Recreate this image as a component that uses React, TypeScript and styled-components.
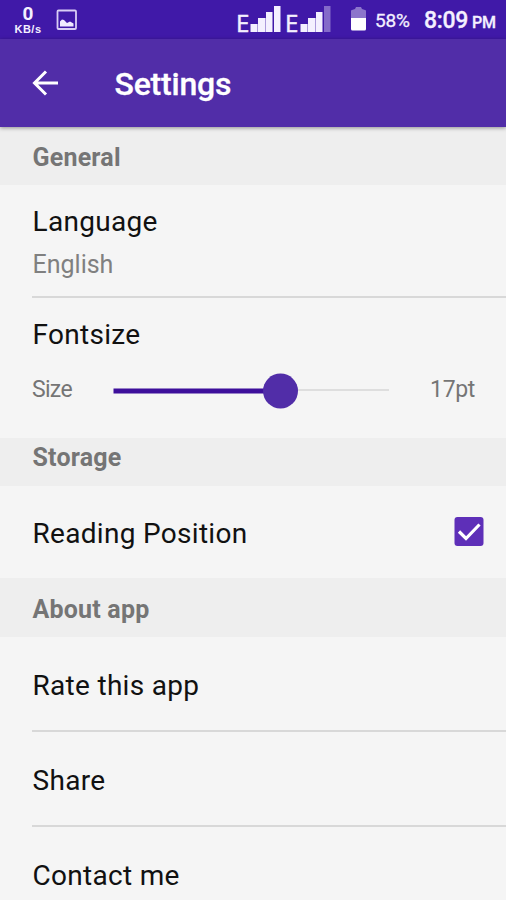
import React from "react";
import styled, { createGlobalStyle } from "styled-components";

const GlobalStyle = createGlobalStyle`
  * { box-sizing: border-box; }
  body { margin: 0; background: #f5f5f5; font-family: Roboto, sans-serif; overflow: hidden; }
`;

const Screen = styled.main`
  display: flex;
  flex-direction: column;
  width: 506px;
  height: 900px;
  overflow: hidden;
  background: #f5f5f5;
`;

const StatusBar = styled.div`
  display: flex;
  flex: none;
  height: 39px;
  background: #4019a8;
  color: #f4f0ff;
`;

const NetSpeed = styled.div`
  display: flex;
  flex-direction: column;
  align-items: center;
  width: 30px;
  margin: 5px 0 0 13px;
`;

const SpeedValue = styled.span`
  font: 700 19px/18px Roboto, sans-serif;
`;

const SpeedUnit = styled.span`
  margin-top: 1px;
  font: 700 11px/11px "Liberation Sans", sans-serif;
  letter-spacing: 0.5px;
`;

const PhotoIcon = styled.svg`
  margin: 9px 0 0 13px;
  width: 22px;
  height: 22px;
`;

const SignalIcon = styled.svg<{ $left: number }>`
  margin: 5px 0 0 ${(p) => p.$left}px;
  width: 32px;
  height: 28px;
`;

const NetworkType = styled.span<{ $left: number }>`
  width: 12px;
  margin: 11px 0 0 ${(p) => p.$left}px;
  font: 400 24px/24px "Open Sans", sans-serif;
  -webkit-text-stroke: 0.5px #f4f0ff;
`;

const BatteryIcon = styled.svg`
  margin: 6px 0 0 18px;
  width: 18px;
  height: 26px;
`;

const BatteryText = styled.span`
  width: 49px;
  margin: 9px 0 0 7px;
  font-size: 19px;
  line-height: 24px;
  letter-spacing: -0.2px;
  -webkit-text-stroke: 0.3px #f4f0ff;
`;

const Clock = styled.span`
  margin: 6px 0 0 0;
  font-size: 23px;
  font-weight: 500;
  line-height: 29px;
  letter-spacing: -0.3px;
  white-space: nowrap;
  -webkit-text-stroke: 0.3px #f4f0ff;
`;

const Meridiem = styled.small`
  margin-left: 4px;
  font-size: 16px;
`;

const Toolbar = styled.header`
  display: flex;
  flex: none;
  align-items: center;
  height: 88px;
  padding-left: 32px;
  background: #512da8;
  box-shadow: 0 1px 4px rgba(0, 0, 0, 0.4);
  z-index: 1;
`;

const BackIcon = styled.svg`
  width: 27px;
  height: 26px;
`;

const Title = styled.h1`
  margin: 1px 0 0 55.5px;
  color: #fff;
  font-size: 32px;
  font-weight: 500;
  line-height: 40px;
  letter-spacing: -0.2px;
  -webkit-text-stroke: 0.3px #fff;
`;

const SectionHeader = styled.h2<{ $height: number; $top: number }>`
  flex: none;
  height: ${(p) => p.$height}px;
  margin: 0;
  padding: ${(p) => p.$top}px 32px 0 32.5px;
  background: #eeeeee;
  color: #757575;
  font-size: 25px;
  font-weight: 700;
  line-height: 30px;
  letter-spacing: 0.2px;
`;

const Row = styled.section<{ $height: number; $top: number; $divided?: boolean }>`
  flex: none;
  height: ${(p) => p.$height}px;
  margin-left: 32px;
  padding-top: ${(p) => p.$top}px;
  border-bottom: ${(p) => (p.$divided ? "2px solid #d8d8d8" : "0")};
`;

const Label = styled.div`
  padding-left: 0.5px;
  color: #111;
  font-size: 28px;
  line-height: 34px;
  letter-spacing: 0.3px;
`;

const Value = styled.div`
  margin-top: 10px;
  padding-left: 0.5px;
  color: #808080;
  font-size: 25px;
  line-height: 32px;
`;

const SliderRow = styled.div`
  display: flex;
  height: 36px;
  margin-top: 20px;
`;

const Small = styled.span<{ $width: number; $spacing?: number }>`
  width: ${(p) => p.$width}px;
  padding-top: 1px;
  color: #757575;
  font-size: 23px;
  line-height: 34px;
  letter-spacing: ${(p) => p.$spacing ?? 0}px;
`;

const Slider = styled.svg`
  width: 276px;
  height: 37px;
  margin-right: 41px;
`;

const CheckRow = styled.div`
  display: flex;
  justify-content: space-between;
  padding-right: 22px;
`;

const CheckIcon = styled.svg`
  width: 30px;
  height: 30px;
`;

function Signal({ left, weak }: { left: number; weak?: boolean }) {
  return (
    <SignalIcon $left={left} viewBox="0 0 32 28" fill="#f4f0ff">
      <path d="M0.500 19h6.500v8H.5zM8 13h7v14H8zM16 7h6.500v20H16z" />
      <path d="M24 1h6.500v26H24z" opacity={weak ? 0.38 : 1} />
      <path d="M7 19h1v8H7zM15 13h1v14h-1z" opacity="0.6" />
    </SignalIcon>
  );
}

export default function App() {
  return (
    <Screen>
      <GlobalStyle />
      <StatusBar>
        <NetSpeed>
          <SpeedValue>0</SpeedValue>
          <SpeedUnit>KB/s</SpeedUnit>
        </NetSpeed>
        <PhotoIcon viewBox="0 0 22 22" fill="#f0eaff">
          <rect x="1.500" y="1.500" width="18.500" height="18.500" rx="1" fill="none" stroke="#d9cef5" strokeWidth="1.800" />
          <path d="M4 17.500v-5l2-2 2 .5 3 3 3-1.500 3.500 2v3z" />
        </PhotoIcon>
        <NetworkType $left={158}>E</NetworkType>
        <Signal left={2} />
        <NetworkType $left={3}>E</NetworkType>
        <Signal left={3} weak />
        <BatteryIcon viewBox="0 0 18 26" fill="#fff">
          <path d="M1 12V5q0-1 1-1l3-1 1-2h5l1 2 3 1q1 0 1 1v7z" opacity="0.4" />
          <path d="M1 12h15v11q0 1.500-1.500 1.500h-12Q1 24.500 1 23z" />
        </BatteryIcon>
        <BatteryText>58%</BatteryText>
        <Clock>
          8:09<Meridiem>PM</Meridiem>
        </Clock>
      </StatusBar>
      <Toolbar>
        <BackIcon viewBox="0 0 27 26" fill="none" stroke="#fff" strokeWidth="3">
          <path d="M26 13H2.500M14 1.500 2.500 13 14 24.500" />
        </BackIcon>
        <Title>Settings</Title>
      </Toolbar>
      <SectionHeader $height={58} $top={16}>General</SectionHeader>
      <Row $height={113} $top={20} $divided>
        <Label>Language</Label>
        <Value>English</Value>
      </Row>
      <Row $height={140} $top={20}>
        <Label>Fontsize</Label>
        <SliderRow>
          <Small $width={81} $spacing={-0.7}>Size</Small>
          <Slider viewBox="0 0 276 37">
            <path d="M167 18H276" stroke="#dedede" strokeWidth="2" />
            <path d="M0.500 19H167" stroke="#3d0f9b" strokeWidth="5" />
            <circle cx="167.500" cy="19" r="17.500" fill="#512da8" />
          </Slider>
          <Small $width={50} $spacing={-0.3}>17pt</Small>
        </SliderRow>
      </Row>
      <SectionHeader $height={48} $top={5}>Storage</SectionHeader>
      <Row $height={92} $top={31}>
        <CheckRow>
          <Label>Reading Position</Label>
          <CheckIcon viewBox="0 0 30 30">
            <rect x="0.500" y="0" width="29" height="29" rx="3" fill="#5e2fb8" />
            <path d="m5 14.500 7 7L25.500 7.500" fill="none" stroke="#fff" strokeWidth="3.200" />
          </CheckIcon>
        </CheckRow>
      </Row>
      <SectionHeader $height={59} $top={17}>About app</SectionHeader>
      <Row $height={95} $top={32} $divided>
        <Label>Rate this app</Label>
      </Row>
      <Row $height={95} $top={32} $divided>
        <Label>Share</Label>
      </Row>
      <Row $height={73} $top={32}>
        <Label>Contact me</Label>
      </Row>
    </Screen>
  );
}
